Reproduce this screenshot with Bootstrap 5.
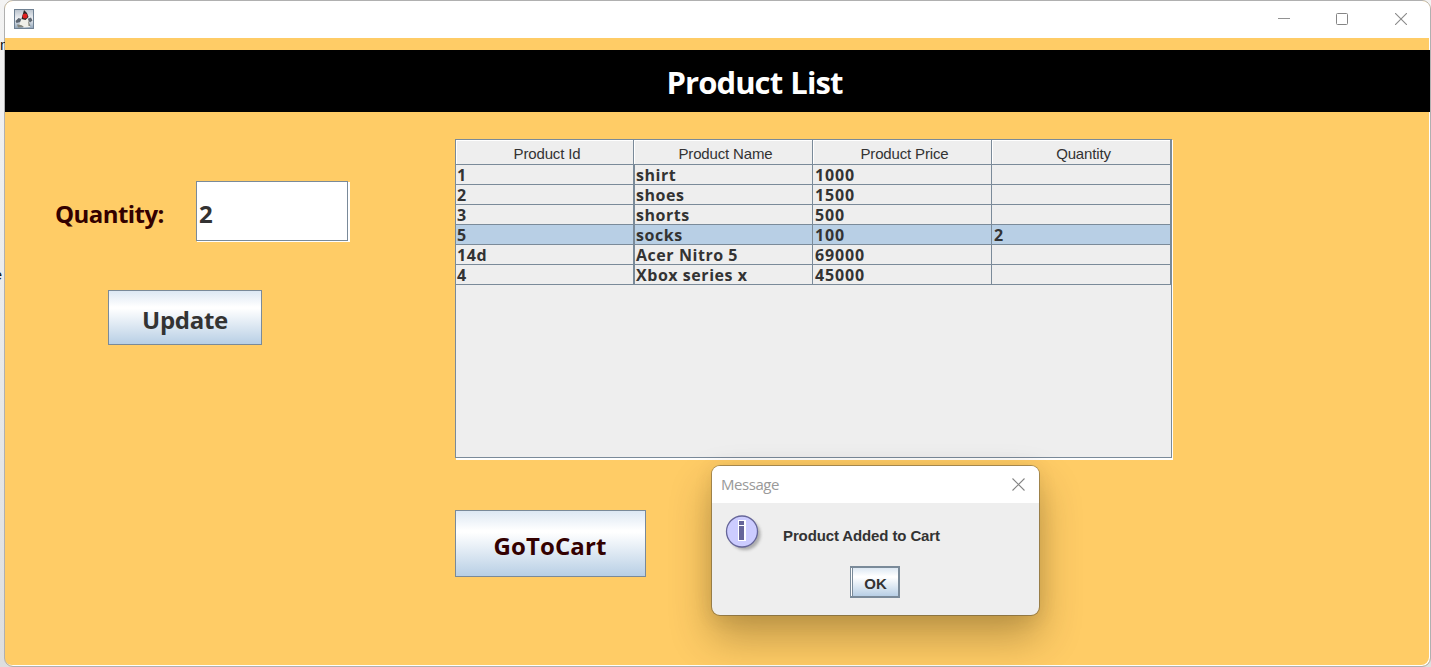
<!DOCTYPE html>
<html lang="en">
<head>
<meta charset="utf-8">
<meta name="viewport" content="width=device-width, initial-scale=1">
<title>Product List</title>
<link href="https://cdn.jsdelivr.net/npm/bootstrap@5.3.0/dist/css/bootstrap.min.css" rel="stylesheet">
<style>
  body { height: 667px; background: linear-gradient(#f3f3f3, #ececec 40%, #dedede); font-family: "Open Sans", "Noto Sans", sans-serif; color: #333; padding-left: 4px; }
  .behind { left: 0; font: 15px/20px "Liberation Sans", sans-serif; color: #111; white-space: nowrap; }
  .behind-m { top: 35px; width: 5px; }
  .behind-e { top: 265px; width: 2px; direction: rtl; }
  .app-window { width: 1427px; height: 667px; border: 1px solid #b0b0b0; border-radius: 9px; background: #fc6; box-shadow: inset -1px -1px #fff; }
  .title-strip { height: 37px; background: #fff; padding: 0 23px 1px 9px; }
  .win-controls { gap: 46px; }
  .heading-band { height: 62px; margin-top: 12px; background: #000; color: #fff; padding-left: 74px; padding-top: 1px; }
  .heading-band h1 { font-size: 31px; line-height: 62px; font-weight: 700; letter-spacing: -.9px; word-spacing: 1px; }
  .side { width: 450px; padding: 69px 0 0 50px; }
  .qty-label { width: 141px; font-size: 24px; font-weight: 700; color: #300; letter-spacing: -.55px; line-height: 60px; padding-top: 3px; }
  .sunken { border: 1px solid #7a8a99; box-shadow: 1px 1px #fff, 2px 1px #fff; }
  .qty-input { width: 152px; height: 60px; border-radius: 0; background: #fff; font-size: 24px; font-weight: 700; color: #333; padding: 5px 2px 0; line-height: 50px; }
  .metal { border: 1px solid #7a8a99; border-radius: 0; background: linear-gradient(#dde8f3, #fff 30%, #fff 33%, #b8cfe5); color: #333; font-weight: 700; padding: 0; }
  .update { width: 154px; height: 55px; margin: 46px 0 0 53px; font-size: 24px; letter-spacing: -.3px; line-height: 58px; }
  .go-cart { width: 191px; height: 67px; margin-top: 52px; font-size: 24px; letter-spacing: .1px; color: #300; line-height: 70px; padding-right: 1px; }
  .list-area { padding-top: 27px; }
  .grid-pane { width: 717px; height: 319px; background: #eee; border: 1px solid #7a8a99; box-shadow: 1px 1px #fff, 1px 2px #fff; }
  .products { width: 715px; table-layout: fixed; border-collapse: separate; border-spacing: 0; margin: 0; }
  .products th { height: 25px; padding: 3px 0 0 5px; font: 15px/20px "Liberation Sans", sans-serif; letter-spacing: -.15px; text-align: center; border-right: 1px solid #7a8a99; border-bottom: 1px solid #7a8a99; box-shadow: inset 1px 1px #fff; }
  .products td { height: 20px; padding: 1px 1px 0; font-size: 16px; line-height: 18px; font-weight: 700; letter-spacing: .55px; border-right: 1px solid #7a8a99; border-bottom: 1px solid #7a8a99; white-space: nowrap; }
  .products td:nth-child(n+3) { padding-left: 2px; letter-spacing: .85px; }
  .products td:nth-child(2) { box-shadow: inset 1px 0 #7a8a99; padding-left: 2px; }
  .products .picked td { background-color: #b8cfe5; }
  .dialog-box { left: 711px; top: 465px; width: 329px; height: 151px; border: 1px solid rgba(90, 80, 60, .5); border-radius: 9px; background: #eee; background-clip: padding-box; box-shadow: 0 22px 42px rgba(60, 45, 10, .32), 0 3px 18px rgba(60, 45, 10, .1); overflow: hidden; }
  .dialog-head { height: 37px; background: #fff; color: #999; font-size: 15px; letter-spacing: -.45px; padding: 0 14px 1px 9px; }
  .dialog-main { padding: 11px 0 0 13px; }
  .dialog-note { font: bold 15px/20px "Liberation Sans", sans-serif; letter-spacing: -.12px; margin: 12px 0 0 19px; }
  .ok-btn { width: 50px; height: 32px; margin: 11px 0 0 138px; font: bold 15px/29px "Liberation Sans", sans-serif; border-width: 2px 2px 2px 1px; padding: 1px 0 0 2px; box-shadow: inset 1px 0 #fff, inset 2px 0 #7a8a99; }
</style>
</head>
<body class="overflow-hidden position-relative">
<div class="behind behind-m position-absolute overflow-hidden">m</div>
<div class="behind behind-e position-absolute overflow-hidden">e</div>

<div class="app-window overflow-hidden">
  <header class="title-strip d-flex align-items-center justify-content-between">
    <svg width="20" height="20" viewBox="0 0 20 20" aria-label="Java">
      <defs><linearGradient id="jbg" x2="0" y2="1"><stop stop-color="#b9c2cc"/><stop offset=".5" stop-color="#f0f2f5"/><stop offset="1" stop-color="#8fa3b8"/></linearGradient></defs>
      <rect x=".5" y=".5" width="19" height="19" fill="url(#jbg)" stroke="#6f8193"/>
      <path d="M1.500 12l3-3 3 1-1 3-4 1zM13 10l4-1.500 1.500 3-2.500 2z" fill="#5d6670"/>
      <path d="M5 17l2-6 3-2 4 1 2 8-6 .5z" fill="#f0efe9"/>
      <path d="M3 15.500q5-.5 7 2.500l-6 .5zM14 11l2.500 6h-2z" fill="#85877e"/>
      <path d="M10 1l3 3 1.500 4-3 3-4-1z" fill="#2a2525"/>
      <circle cx="11" cy="7" r="2.500" fill="#e02020"/>
    </svg>
    <div class="win-controls d-flex align-items-center">
      <svg width="12" height="12" viewBox="0 0 12 12" overflow="visible"><path d="M-1 5.500h12" stroke="#929292"/></svg>
      <svg width="12" height="12" viewBox="0 0 12 12" overflow="visible"><rect x="-.5" y=".5" width="11" height="11" rx="1" fill="none" stroke="#858585"/></svg>
      <svg width="12" height="12" viewBox="0 0 12 12"><path d="M0 0l12 12M12 0L0 12" stroke="#8a8a8a" stroke-width="1.100"/></svg>
    </div>
  </header>

  <div class="heading-band text-center"><h1 class="m-0">Product List</h1></div>

  <main class="d-flex">
    <section class="side">
      <div class="d-flex">
        <label class="qty-label" for="qty">Quantity:</label>
        <input id="qty" class="qty-input sunken" value="2">
      </div>
      <button class="btn metal update d-block">Update</button>
    </section>
    <section class="list-area">
      <div class="grid-pane">
        <table class="products">
          <colgroup><col style="width:178px"><col style="width:179px"><col style="width:179px"><col style="width:179px"></colgroup>
          <thead><tr><th>Product Id</th><th>Product Name</th><th>Product Price</th><th>Quantity</th></tr></thead>
          <tbody>
            <tr><td>1</td><td>shirt</td><td>1000</td><td></td></tr>
            <tr><td>2</td><td>shoes</td><td>1500</td><td></td></tr>
            <tr><td>3</td><td>shorts</td><td>500</td><td></td></tr>
            <tr class="picked"><td>5</td><td>socks</td><td>100</td><td>2</td></tr>
            <tr><td>14d</td><td>Acer Nitro 5</td><td>69000</td><td></td></tr>
            <tr><td>4</td><td>Xbox series x</td><td>45000</td><td></td></tr>
          </tbody>
        </table>
      </div>
      <button class="btn metal go-cart d-block">GoToCart</button>
    </section>
  </main>
</div>

<div class="dialog-box position-absolute" role="dialog" aria-label="Message">
  <div class="dialog-head d-flex align-items-center justify-content-between">
    <span>Message</span>
    <svg width="13" height="13" viewBox="0 0 13 13"><path d="M.5.5l12 12M12.500.5l-12 12" stroke="#858585" stroke-width="1.100"/></svg>
  </div>
  <div class="dialog-main d-flex">
    <svg width="39" height="41" viewBox="0 0 39 41">
      <defs><filter id="soft" x="-20%" y="-20%" width="150%" height="150%"><feGaussianBlur stdDeviation="1.4"/></filter></defs>
      <circle cx="20" cy="20.500" r="15.500" fill="#888" opacity=".65" filter="url(#soft)"/>
      <circle cx="17" cy="17.500" r="15.500" fill="#ccf" stroke="#669" stroke-width="1.300"/>
      <path d="M13 6h8v21h-8z" fill="#fff"/>
      <path d="M14 7h5v4h-5zM14 12h5v14h-5z" fill="#669"/>
    </svg>
    <div class="dialog-note">Product Added to Cart</div>
  </div>
  <button class="btn metal ok-btn d-block">OK</button>
</div>
<script src="https://cdn.jsdelivr.net/npm/bootstrap@5.3.0/dist/js/bootstrap.bundle.min.js"></script>
</body>
</html>
